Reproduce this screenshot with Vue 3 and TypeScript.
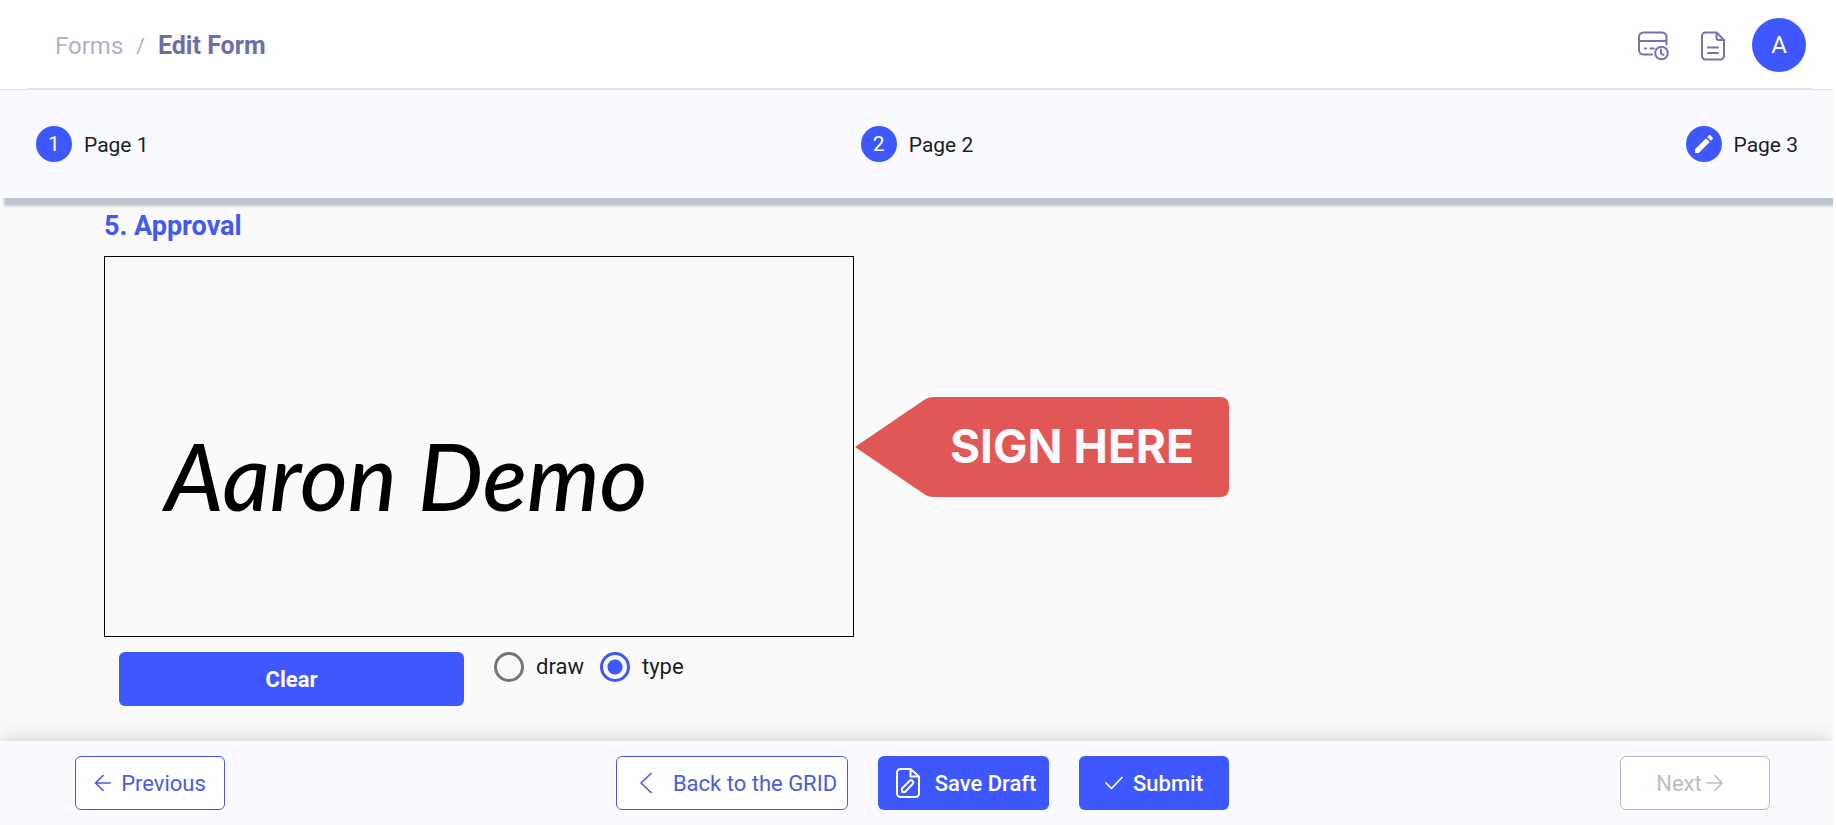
<script setup lang="ts">
import { ref } from 'vue'

interface Step {
  label: string
  done: boolean
}

const steps: Step[] = [
  { label: 'Page 1', done: true },
  { label: 'Page 2', done: true },
  { label: 'Page 3', done: false },
]

const modes = ['draw', 'type'] as const
const mode = ref<(typeof modes)[number]>('type')
const signature = ref('Aaron Demo')

function clearSignature(): void {
  signature.value = ''
}
</script>

<template>
  <div class="page">
    <header class="topbar">
      <nav class="crumbs" aria-label="Breadcrumb">
        <a href="#forms">Forms</a>
        <span class="slash">/</span>
        <strong>Edit Form</strong>
      </nav>
      <div class="tools">
        <button type="button" class="tool" aria-label="Billing history">
          <svg width="32" height="30" viewBox="0 0 32 30">
            <path d="M15 23.500H6.500A4.500 4.500 0 0 1 2 19V6A4.500 4.500 0 0 1 6.500 1.500H25A4.500 4.500 0 0 1 29.500 6V13.500M2 10H29.500M8 17.500h1M13.500 17.500h3.500" />
            <circle cx="24.500" cy="22" r="6.300" />
            <path d="M24 18.500V22.500L26.500 24" />
          </svg>
        </button>
        <button type="button" class="tool" aria-label="Documents">
          <svg width="26" height="30" viewBox="0 0 26 30">
            <path d="M16.500 1.500H5.500A3.500 3.500 0 0 0 2 5V25A3.500 3.500 0 0 0 5.500 28.500H20.500A3.500 3.500 0 0 0 24 25V9ZM16.500 1.500V7A2 2 0 0 0 18.500 9H24M8 16.500H18M8 22H18" />
          </svg>
        </button>
        <button type="button" class="avatar" aria-label="Account">A</button>
      </div>
    </header>

    <ol class="steps">
      <li v-for="(step, i) in steps" :key="step.label" class="step">
        <span class="dot">
          <template v-if="step.done">{{ i + 1 }}</template>
          <svg v-else width="24" height="24" viewBox="0 0 24 24">
            <path d="M3 17.250V21h3.750L17.810 9.940l-3.750-3.750L3 17.250zM20.710 7.040a1 1 0 0 0 0-1.410l-2.340-2.340a1 1 0 0 0-1.410 0l-1.830 1.830 3.750 3.750 1.830-1.830z" />
          </svg>
        </span>
        <span class="step-label">{{ step.label }}</span>
      </li>
    </ol>

    <main class="content">
      <h2>5. Approval</h2>
      <div class="sign-row">
        <div class="pad">
          <span class="signature">{{ signature }}</span>
        </div>
        <svg class="flag" width="376" height="100" viewBox="0 0 376 100">
          <path d="M1 50L70 3Q74 0 80 0H366Q375 0 375 9V91Q375 100 366 100H80Q74 100 70 97Z" />
          <text x="96" y="66">SIGN HERE</text>
        </svg>
      </div>
      <div class="controls">
        <button type="button" class="btn solid clear" @click="clearSignature"><span>Clear</span></button>
        <div class="modes">
          <label v-for="m in modes" :key="m" class="mode">
            <input v-model="mode" type="radio" name="mode" :value="m" />
            <span>{{ m }}</span>
          </label>
        </div>
      </div>
    </main>

    <footer class="actions">
      <button type="button" class="btn line previous">
        <svg width="18" height="18" viewBox="0 0 18 18"><path d="M16 9H1.500M9 1.500L1.500 9l7.500 7.500" /></svg>
        <span>Previous</span>
      </button>
      <div class="group">
        <button type="button" class="btn line back">
          <svg width="14" height="22" viewBox="0 0 14 22"><path d="M12 1.500L2 11l10 9.500" /></svg>
          <span>Back to the GRID</span>
        </button>
        <button type="button" class="btn solid save">
          <svg width="26" height="32" viewBox="0 0 26 32">
            <path d="M15.500 2H5.500A3.500 3.500 0 0 0 2 5.500V26.500A3.500 3.500 0 0 0 5.500 30H20.500A3.500 3.500 0 0 0 24 26.500V9.500ZM15.500 2V9.500H24M7 25V21.500L15 13.500A1.500 1.500 0 0 1 17 13.500L18 14.500A1.500 1.500 0 0 1 18 16.500L10 25Z" />
          </svg>
          <span>Save Draft</span>
        </button>
        <button type="button" class="btn solid submit">
          <svg width="18" height="14" viewBox="0 0 18 14"><path d="M1 7l5.500 5.500L17 1.500" /></svg>
          <span>Submit</span>
        </button>
      </div>
      <button type="button" class="btn line next" disabled>
        <span>Next</span>
        <svg width="18" height="18" viewBox="0 0 18 18"><path d="M1 9h15M9 1.500L16 9l-7 7.500" /></svg>
      </button>
    </footer>
  </div>
</template>

<style>
body {
  margin: 0;
  background: #fff;
}
</style>

<style scoped>
.page {
  box-sizing: border-box;
  display: flex;
  flex-direction: column;
  min-height: 100vh;
  margin-right: 3px;
  overflow: hidden;
  background: #fafafa;
  color: #1d1d1f;
  font: 400 21px/28px Roboto, "Liberation Sans", sans-serif;
}
button {
  padding: 0;
  border: 0;
  background: none;
  font: inherit;
  cursor: pointer;
}
svg {
  flex: none;
  fill: none;
  stroke: currentColor;
  stroke-width: 2;
  stroke-linecap: round;
  stroke-linejoin: round;
}
.topbar {
  display: flex;
  align-items: center;
  justify-content: space-between;
  height: 89px;
  padding: 0 27px 0 55px;
  border-bottom: 1px solid #e4e4e7;
  background: linear-gradient(#e4e4ea, #e4e4ea) 27px 100% / calc(100% - 48px) 1px no-repeat #fff;
}
.crumbs {
  display: flex;
  align-items: center;
  gap: 13px;
  padding-top: 2px;
  color: #b1b1c5;
  font-size: 24px;
}
.crumbs a {
  color: inherit;
  text-decoration: none;
}
.slash {
  font-size: 21px;
}
.crumbs strong {
  color: #6b70a8;
  font-size: 25px;
  font-weight: 700;
}
.tools {
  display: flex;
  align-items: center;
}
.tool {
  display: flex;
  padding-top: 2px;
  margin-right: 31px;
  color: #7176ad;
}
.tool + .tool {
  margin-right: 26px;
}
.avatar {
  width: 54px;
  height: 54px;
  border-radius: 50%;
  background: #3f57ff;
  color: #fff;
  font-size: 24px;
}
.steps {
  z-index: 1;
  display: flex;
  align-items: center;
  justify-content: space-between;
  height: 108px;
  margin: 0;
  padding: 0 35px 0 36px;
  background: #f9faff;
  box-shadow: 4px 8px 3px #bbc3cf;
  list-style: none;
}
.step {
  display: flex;
  align-items: center;
  gap: 12px;
}
.step-label {
  padding-top: 2px;
}
.dot {
  display: flex;
  align-items: center;
  justify-content: center;
  width: 36px;
  height: 36px;
  border-radius: 50%;
  background: #3f57ff;
  color: #fff;
}
.dot svg {
  fill: #fff;
  stroke: none;
}
.content {
  flex: 1;
  padding: 12px 104px 35px;
}
h2 {
  margin: 0 0 14px;
  color: #4359f0;
  font-size: 27px;
  font-weight: 700;
  line-height: 32px;
}
.sign-row {
  display: flex;
  align-items: center;
}
.pad {
  box-sizing: border-box;
  display: flex;
  align-items: center;
  width: 750px;
  height: 381px;
  padding: 58px 60px 0;
  border: 1px solid #000;
}
.signature {
  color: #000;
  font: italic 500 92px/96px Lato, "Liberation Sans", sans-serif;
  white-space: nowrap;
}
.flag path {
  fill: #e15756;
  stroke: none;
}
.flag text {
  fill: #fafafa;
  stroke: none;
  font: 700 46px Inter, "Liberation Sans", sans-serif;
}
.controls {
  display: flex;
  align-items: flex-start;
  gap: 30px;
  padding: 15px 15px 0;
}
.modes {
  display: flex;
  gap: 16px;
  font-size: 22px;
}
.mode {
  display: flex;
  align-items: center;
  gap: 12px;
}
.mode input {
  appearance: none;
  box-sizing: border-box;
  width: 30px;
  height: 30px;
  margin: 0;
  border: 3px solid #757575;
  border-radius: 50%;
}
.mode input:checked {
  border-color: #3f57ff;
  background: radial-gradient(circle, #3f57ff 7px, transparent 8px);
}
.btn {
  box-sizing: border-box;
  display: flex;
  align-items: center;
  justify-content: center;
  min-width: 150px;
  height: 54px;
  border-radius: 6px;
  font-size: 22px;
  white-space: nowrap;
}
.btn span {
  padding-top: 2px;
}
.solid {
  background: #3f57ff;
  color: #fff;
  font-weight: 500;
}
.line {
  border: 1px solid #4a5bd0;
  background: #fff;
  color: #4a5ce0;
}
.clear {
  width: 345px;
  font-weight: 700;
}
.actions {
  z-index: 1;
  display: flex;
  align-items: center;
  justify-content: space-between;
  height: 84px;
  padding: 0 63px 0 75px;
  background: #f9faff;
  box-shadow: 0 0 20px rgba(0, 0, 0, 0.2);
}
.group {
  display: flex;
  gap: 30px;
}
.previous {
  gap: 9px;
}
.back {
  width: 232px;
  gap: 20px;
  padding-left: 12px;
}
.save {
  width: 171px;
  gap: 14px;
  padding-left: 4px;
}
.submit {
  gap: 10px;
}
.next {
  gap: 4px;
  padding-right: 10px;
  border-color: #b8b8bd;
  color: #bdbdc1;
  cursor: default;
}
.line svg,
.submit svg {
  stroke-width: 1.700;
}
</style>
